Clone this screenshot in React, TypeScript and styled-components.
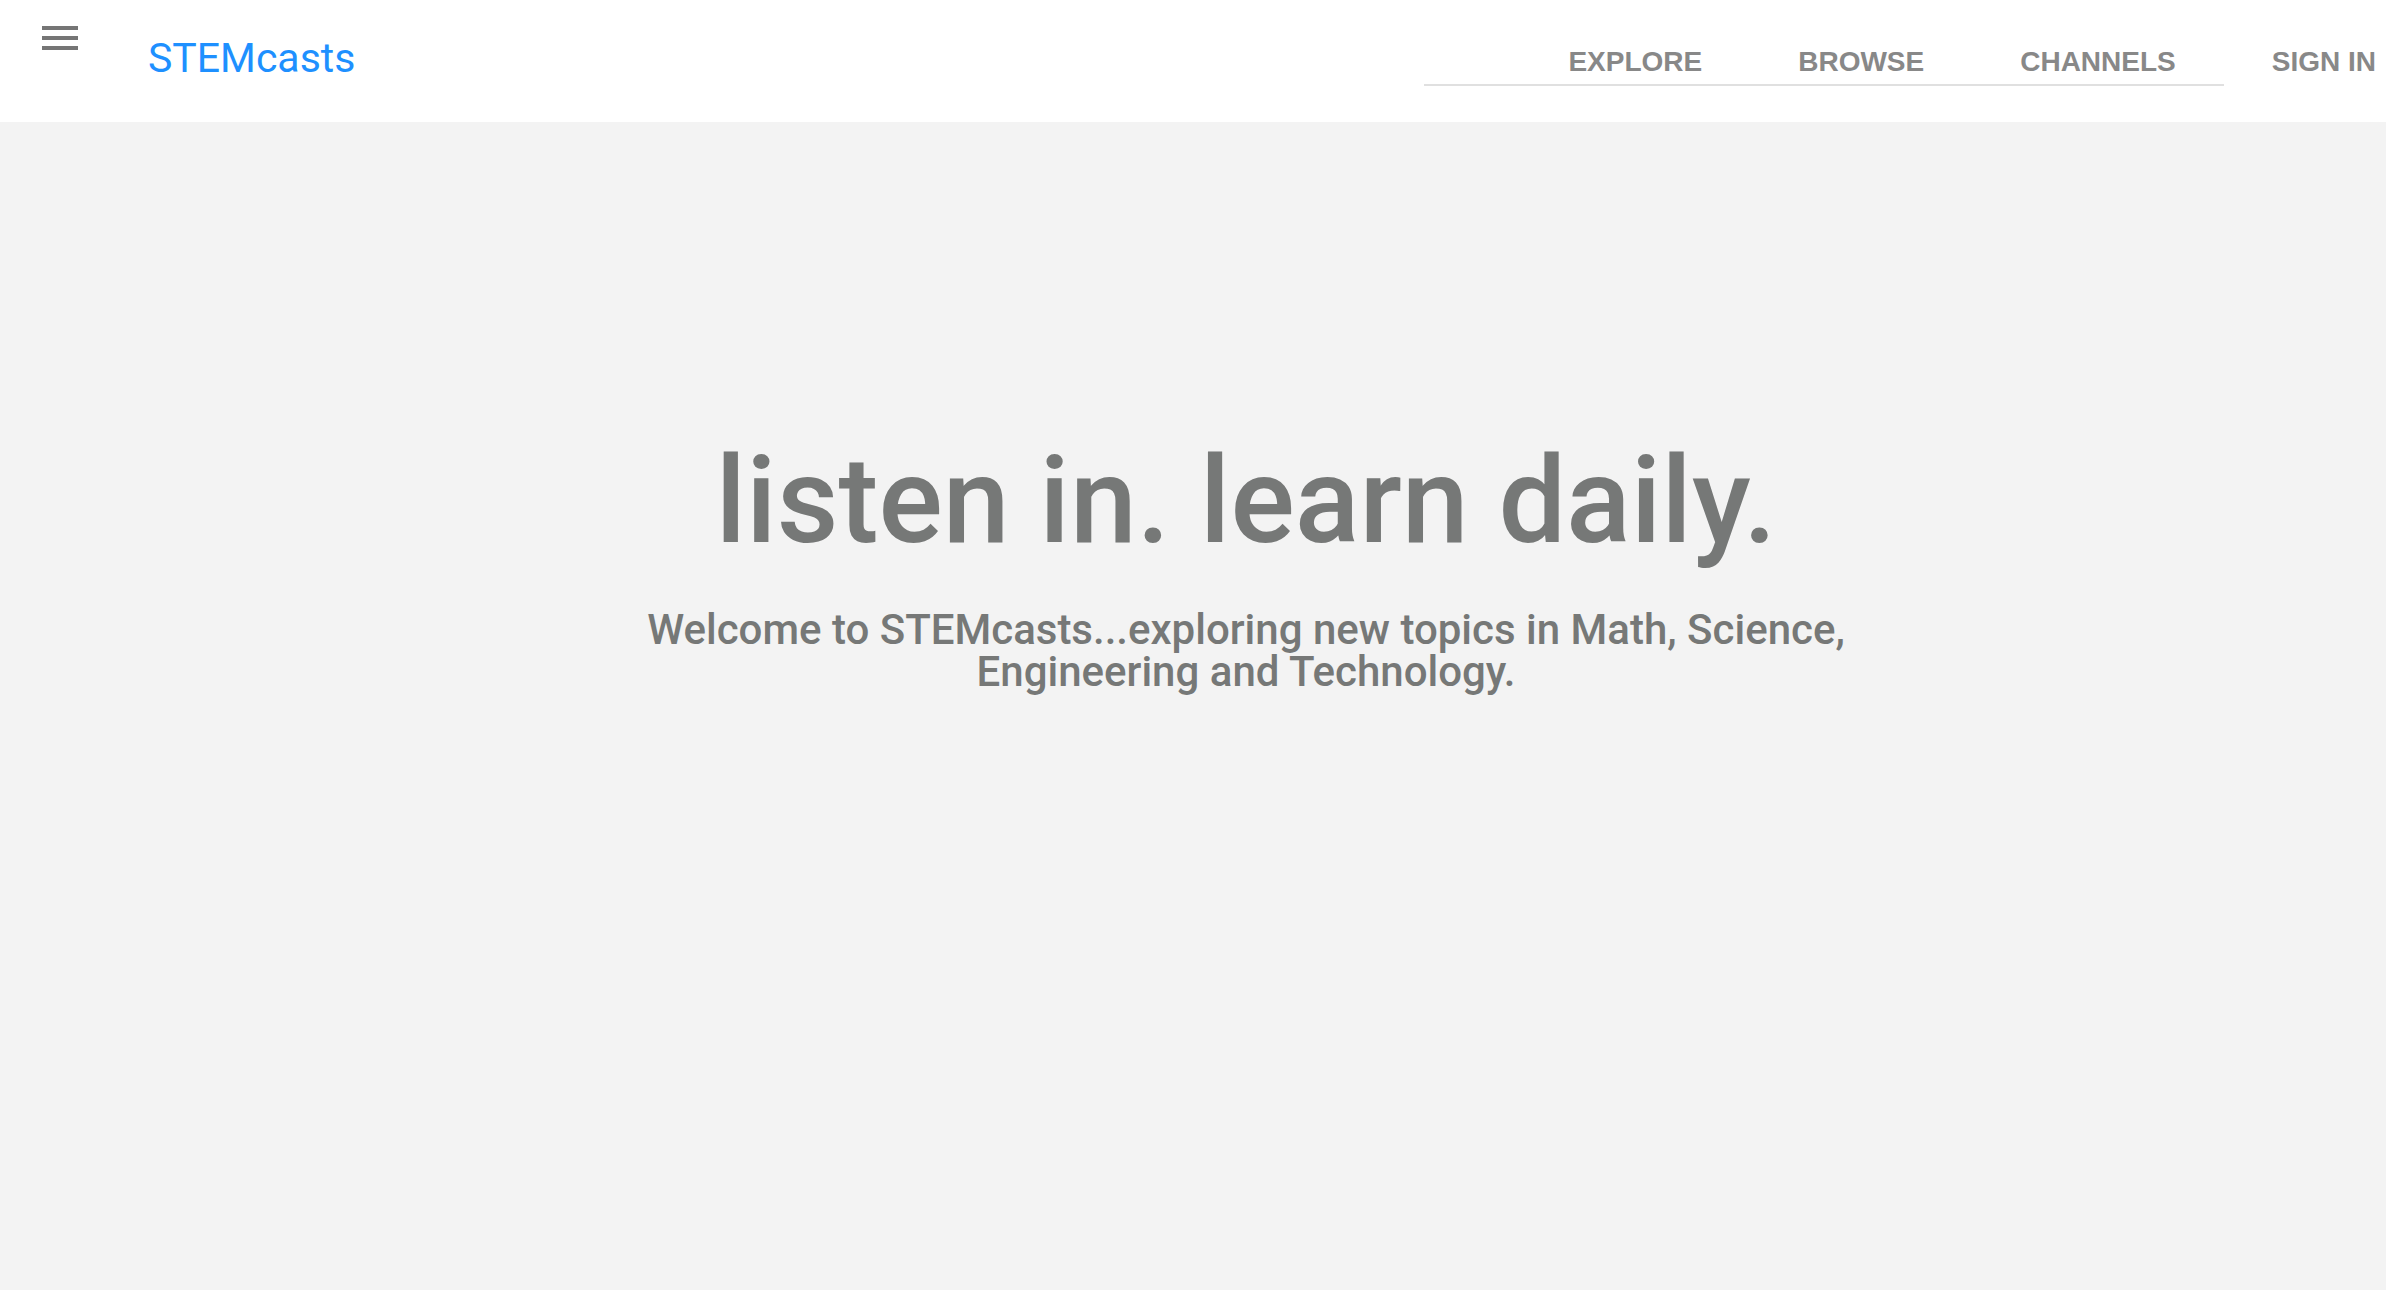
import React from "react";
import styled, { createGlobalStyle } from "styled-components";

const GlobalStyle = createGlobalStyle`
  body { margin: 0; background: #f3f3f3; font-family: Roboto, sans-serif; }
`;

const Page = styled.div`
  display: flex;
  flex-direction: column;
  min-height: 100vh;
`;

const Header = styled.header`
  display: flex;
  align-items: flex-start;
  height: 122px;
  background: #fff;
`;

const MenuButton = styled.button`
  display: flex;
  margin: 14px 0 0 36px;
  padding: 0;
  border: 0;
  background: none;
  color: #757575;
  cursor: pointer;
`;

const Brand = styled.a`
  margin: 34px auto 0 64px;
  color: #1e90ff;
  font-size: 41px;
  line-height: 48px;
  text-decoration: none;
`;

const Nav = styled.nav`
  display: flex;
  gap: 48px;
  margin-top: 36px;
  padding-right: 10px;
`;

const LinkList = styled.ul`
  display: flex;
  gap: 96px;
  margin: 0;
  padding: 0 48px 0 144px;
  border-bottom: 2px solid #e0e0e0;
  list-style: none;
`;

const NavLink = styled.a`
  display: block;
  height: 48px;
  color: #888;
  font: bold 28px/52px "Liberation Sans", Arial, sans-serif;
  text-decoration: none;
  white-space: nowrap;
`;

const Hero = styled.main`
  display: flex;
  flex: 1;
  flex-direction: column;
  align-items: center;
  padding: 307px 0 48px 106px;
  color: #767877;
  text-align: center;
`;

const Title = styled.h1`
  margin: 0;
  font-size: 120px;
  font-weight: 500;
  line-height: 144px;
`;

const Tagline = styled.p`
  max-width: 1240px;
  margin: 36px 0 0;
  font-size: 42px;
  font-weight: 500;
  line-height: 42px;
`;

const links = ["EXPLORE", "BROWSE", "CHANNELS"];

export default function App() {
  return (
    <Page>
      <GlobalStyle />
      <Header>
        <MenuButton type="button" aria-label="Open menu">
          <svg width="48" height="48" viewBox="0 0 24 24" fill="currentColor" aria-hidden="true">
            <path d="M3 18h18v-2H3v2zm0-5h18v-2H3v2zm0-7v2h18V6H3z" />
          </svg>
        </MenuButton>
        <Brand href="#">STEMcasts</Brand>
        <Nav>
          <LinkList>
            {links.map((label) => (
              <li key={label}>
                <NavLink href="#">{label}</NavLink>
              </li>
            ))}
          </LinkList>
          <NavLink href="#">SIGN IN</NavLink>
        </Nav>
      </Header>
      <Hero>
        <Title>listen in. learn daily.</Title>
        <Tagline>Welcome to STEMcasts...exploring new topics in Math, Science, Engineering and Technology.</Tagline>
      </Hero>
    </Page>
  );
}
